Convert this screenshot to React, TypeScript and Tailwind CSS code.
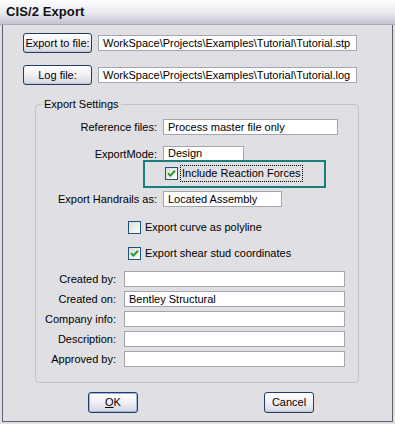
import React from "react";

const Field = ({ w, value = "", h = 16 }: { w: number; value?: string; h?: number }) => (
  <div
    className="bg-white border border-[#a5a5ad] flex items-center pl-[4px] whitespace-nowrap overflow-hidden leading-none"
    style={{ width: w, height: h }}
  >
    {value}
  </div>
);

const Btn = ({ w, h, children, focus = false }: { w: number; h: number; children: React.ReactNode; focus?: boolean }) => (
  <div
    className={`rounded-[3px] border border-[#1f3d66] bg-gradient-to-b from-[#ffffff] via-[#f0f0f5] to-[#d5d5e0] flex items-center justify-center leading-none ${focus ? "shadow-[inset_0_0_0_1px_#9fb6e0]" : "shadow-[inset_0_-1px_0_#c7c7d2]"}`}
    style={{ width: w, height: h }}
  >
    {children}
  </div>
);

const Check = ({ checked }: { checked: boolean }) => (
  <div className="w-[13px] h-[13px] border border-[#1c5180] bg-gradient-to-br from-[#dcdcd6] to-[#ffffff] flex items-center justify-center shrink-0">
    {checked && (
      <svg width="9" height="9" viewBox="0 0 9 9">
        <path d="M1 4.2 L3.4 6.6 L8 1.8" stroke="#21a121" strokeWidth="2" fill="none" />
      </svg>
    )}
  </div>
);

export default function App() {
  return (
    <div className="w-[395px] h-[424px] bg-[#e0dfe3] relative overflow-hidden font-['Liberation_Sans',Arial,sans-serif] text-[11px] text-black flex flex-col">
      <div className="h-[25px] shrink-0 bg-gradient-to-b from-[#fdfdfe] via-[#ececf1] to-[#c3c3d2] border-b border-[#a8a8b8] pl-[6px] flex items-center">
        <span className="text-[13px] font-bold text-[#111] tracking-[0.1px]">CIS/2 Export</span>
      </div>
      <div className="mx-[2px] h-[397px] border-x border-b border-[#5d5d72] flex flex-col pl-[20px]">
        <div className="flex items-center gap-[6px] mt-[8px]">
          <Btn w={69} h={20}>Export to file:</Btn>
          <Field w={259} value={"WorkSpace\\Projects\\Examples\\Tutorial\\Tutorial.stp"} />
        </div>
        <div className="flex items-center gap-[6px] mt-[12px]">
          <Btn w={69} h={20}>Log file:</Btn>
          <Field w={259} value={"WorkSpace\\Projects\\Examples\\Tutorial\\Tutorial.log"} />
        </div>
        <fieldset className="ml-[12px] mt-[12px] w-[324px] border border-[#c2c2c8] rounded-[4px] px-0 pb-[15px]">
          <legend className="ml-[6px] px-[2px] leading-[14px]">Export Settings</legend>
          <div className="flex items-center mt-[8px]">
            <div className="w-[121px] text-right">Reference files:</div>
            <div className="ml-[6px]"><Field w={175} value="Process master file only" /></div>
          </div>
          <div className="flex items-center mt-[10px]">
            <div className="w-[121px] text-right">ExportMode:</div>
            <div className="ml-[6px]"><Field w={81} value="Design" /></div>
          </div>
          <div className="flex items-center mt-[3px] h-[17px] pl-[129px]">
            <Check checked />
            <div className="ml-[2px] h-[17px] border border-dotted border-black flex items-center px-[1px] leading-none">
              Include Reaction Forces
            </div>
          </div>
          <div className="flex items-center mt-[9px]">
            <div className="w-[121px] text-right">Export Handrails as:</div>
            <div className="ml-[6px]"><Field w={119} value="Located Assembly" /></div>
          </div>
          <div className="flex items-center mt-[13px] h-[13px] pl-[92px]">
            <Check checked={false} />
            <span className="ml-[4px]">Export curve as polyline</span>
          </div>
          <div className="flex items-center mt-[13px] h-[13px] pl-[92px]">
            <Check checked />
            <span className="ml-[4px]">Export shear stud coordinates</span>
          </div>
          <div className="flex items-center mt-[11px]">
            <div className="w-[80px] text-right">Created by:</div>
            <div className="ml-[8px]"><Field w={221} /></div>
          </div>
          <div className="flex items-center mt-[4px]">
            <div className="w-[80px] text-right">Created on:</div>
            <div className="ml-[8px]"><Field w={221} value="Bentley Structural" /></div>
          </div>
          <div className="flex items-center mt-[3px]">
            <div className="w-[80px] text-right">Company info:</div>
            <div className="ml-[8px]"><Field w={221} /></div>
          </div>
          <div className="flex items-center mt-[4px]">
            <div className="w-[80px] text-right">Description:</div>
            <div className="ml-[8px]"><Field w={221} /></div>
          </div>
          <div className="flex items-center mt-[3px]">
            <div className="w-[80px] text-right">Approved by:</div>
            <div className="ml-[8px]"><Field w={221} /></div>
          </div>
        </fieldset>
        <div className="flex mt-[9px] pl-[65px] gap-[126px]">
          <Btn w={50} h={21} focus>
            <span><span className="underline">O</span>K</span>
          </Btn>
          <Btn w={50} h={21}>Cancel</Btn>
        </div>
      </div>
      <div className="absolute left-[143px] top-[160px] w-[183px] h-[28px] border-2 border-[#17807b] pointer-events-none" />
    </div>
  );
}
